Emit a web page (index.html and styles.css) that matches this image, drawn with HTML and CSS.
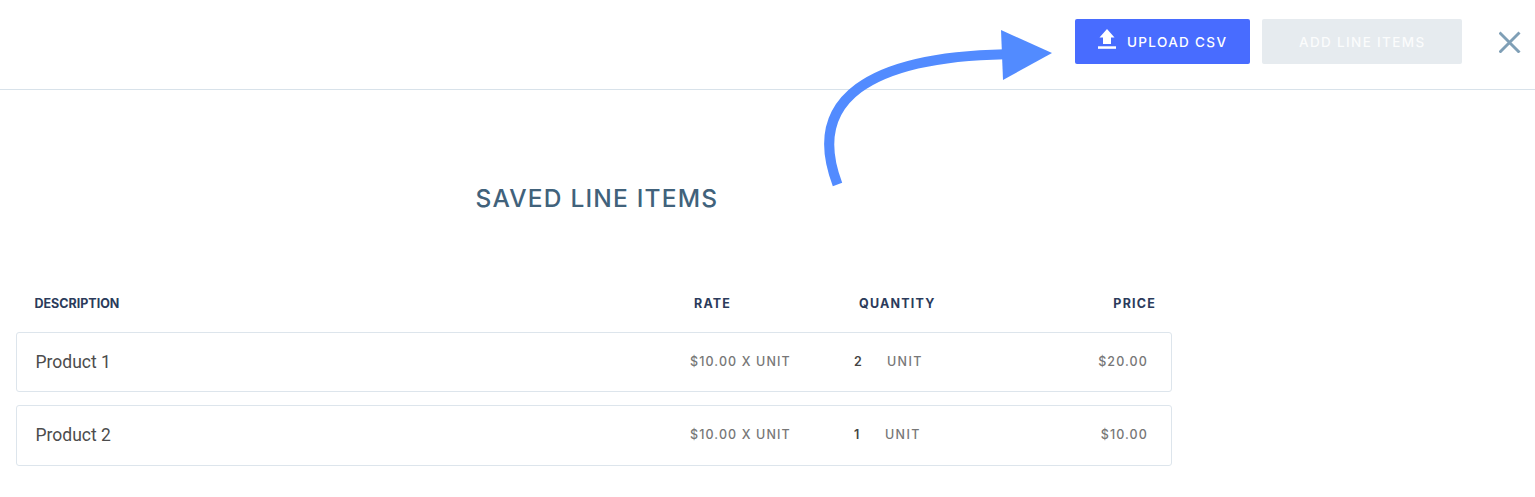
FILE: index.html
```html
<!DOCTYPE html>
<html lang="en">
<head>
    <meta charset="UTF-8">
    <meta name="viewport" content="width=device-width, initial-scale=1.0">
    <title>Saved Line Items</title>
    <link rel="stylesheet" href="styles.css">
</head>
<body>
    <header class="top-bar">
        <button class="btn btn-upload">
            <svg class="upload-icon" width="18" height="20" viewBox="0 0 18 20">
                <path d="M9 0L16.5 8.5H13V15H5V8.5H1.5Z" fill="#fff"/>
                <rect y="17.3" width="18" height="2.5" fill="#fff"/>
            </svg>
            <span>Upload CSV</span>
        </button>
        <button class="btn btn-add" disabled><span class="add-label">Add Line Items</span></button>
        <button class="close" aria-label="Close">
            <svg width="22" height="22" viewBox="0 0 22 22">
                <path d="M0.500 1.500L20.500 21.500M20.500 1.500L0.500 21.500" stroke="#7f9fb6" stroke-width="2.9"/>
            </svg>
        </button>
    </header>

    <svg class="arrow" width="240" height="165" viewBox="0 0 240 165">
        <path d="M17.5 159.5C-15 74 50 32 185 29.200" fill="none" stroke="#528bff" stroke-width="10"/>
        <path d="M181 5L232 28L183 55Z" fill="#528bff"/>
    </svg>

    <main class="items">
        <h1>Saved Line Items</h1>
        <div class="row head">
            <div class="description">Description</div>
            <div class="rate">Rate</div>
            <div class="quantity">Quantity</div>
            <div class="price">Price</div>
        </div>
        <div class="row item">
            <div class="description">Product 1</div>
            <div class="rate">$10.00 X Unit</div>
            <div class="quantity"><b>2</b><span>Unit</span></div>
            <div class="price">$20.00</div>
        </div>
        <div class="row item tall">
            <div class="description">Product 2</div>
            <div class="rate">$10.00 X Unit</div>
            <div class="quantity one"><b>1</b><span>Unit</span></div>
            <div class="price">$10.00</div>
        </div>
    </main>
</body>
</html>
```

FILE: styles.css
```css
* {
    margin: 0;
    padding: 0;
    box-sizing: border-box;
}

body {
    background: #fff;
    font-family: Inter, Arial, sans-serif;
}

.top-bar {
    display: flex;
    justify-content: flex-end;
    align-items: flex-start;
    height: 90px;
    padding: 19px 14px 0 0;
    border-bottom: 1px solid #d8e2ea;
}

.btn {
    display: flex;
    align-items: center;
    height: 45px;
    border: none;
    border-radius: 2px;
    color: #fff;
    font: 500 13.5px/20px Inter, Arial, sans-serif;
    letter-spacing: 1.35px;
    text-transform: uppercase;
    white-space: nowrap;
}

.btn-upload {
    width: 175px;
    margin-right: 12px;
    padding: 1px 0 0 23px;
    background: #486cff;
}

.upload-icon {
    margin: -6px 11px 0 0;
}

.btn-add {
    width: 200px;
    padding: 1px 0 0 37px;
    background: #e6ebef;
}

.add-label {
    opacity: 0.85;
}

.close {
    height: 22px;
    margin: 12px 0 0 37px;
    border: none;
    background: none;
}

.close svg {
    display: block;
}

/* callout arrow pointing at the upload button */
.arrow {
    position: absolute;
    left: 820px;
    top: 25px;
}

.items {
    width: 1156px;
    margin-left: 16px;
}

h1 {
    padding: 92px 0 0 459.5px;
    color: #41627b;
    font-size: 24.5px;
    font-weight: 500;
    line-height: 32px;
    letter-spacing: 1.2px;
    text-transform: uppercase;
    white-space: nowrap;
}

.row {
    display: flex;
    align-items: center;
    white-space: nowrap;
}

.head {
    height: 20px;
    margin: 79px 0 19px;
    color: #2b3b5b;
    font-size: 12.5px;
    font-weight: 700;
    letter-spacing: 1.2px;
    text-transform: uppercase;
}

.description {
    width: 673px;
    padding-left: 18.5px;
}

.rate {
    width: 164px;
}

.head .rate {
    padding-left: 5px;
}

.head .quantity {
    padding-left: 6px;
}

.head .price {
    margin-right: 16px;
}

.head .description {
    letter-spacing: 0;
}

.item {
    height: 60px;
    margin-bottom: 13px;
    padding-bottom: 1px;
    border: 1px solid #dde5ec;
    border-radius: 3px;
    color: #777;
    font-size: 12.5px;
    font-weight: 500;
    letter-spacing: 1.12px;
    text-transform: uppercase;
}

.tall {
    height: 61px;
    padding-bottom: 2px;
}

.item .description {
    padding-top: 1px;
    color: #4c4c4c;
    font-family: Roboto, Arial, sans-serif;
    font-size: 17.5px;
    font-weight: 400;
    letter-spacing: 0;
    text-transform: none;
}

.quantity span {
    letter-spacing: 1.35px;
}

.quantity b {
    display: inline-block;
    width: 33px;
    color: #444;
    font-weight: 600;
}

.quantity.one b {
    width: 31px;
}

.price {
    margin-left: auto;
    margin-right: 23px;
}
```
